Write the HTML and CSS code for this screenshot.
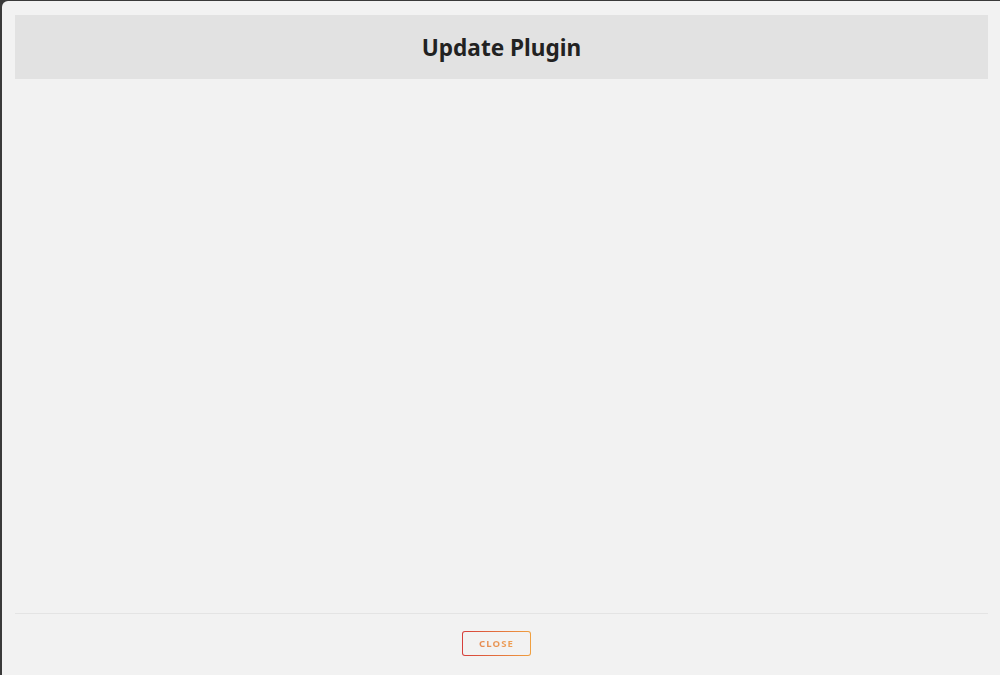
FILE: index.html
```html
<!DOCTYPE html>
<html lang="en">
<head>
    <meta charset="UTF-8">
    <meta name="viewport" content="width=device-width, initial-scale=1.0">
    <title>Update Plugin</title>
    <link rel="stylesheet" href="styles.css">
</head>
<body>
    <!-- Plugin update dialog -->
    <div class="modal">
        <div class="modal-header">
            <h1 class="modal-title">Update Plugin</h1>
        </div>

        <div class="modal-body"></div>

        <div class="modal-footer">
            <button class="btn-outline" type="button"><span>Close</span></button>
        </div>
    </div>
</body>
</html>
```

FILE: styles.css
```css
/* Dark backdrop behind the dialog */
html, body {
    margin: 0;
    padding: 0;
    height: 100%;
    overflow: hidden;
    background: #3a3a3a;
    font-family: "Noto Sans", sans-serif;
}

/* Dialog box */
.modal {
    margin: 1px 0 0 2px;
    height: 690px;
    background: #f2f2f2;
    border-radius: 6px 0 0 0;
    padding: 14px 12px 0 13px;
    display: flex;
    flex-direction: column;
}

/* Grey title strip */
.modal-header {
    height: 64px;
    background: #e2e2e2;
    display: flex;
    justify-content: center;
    align-items: center;
}

.modal-title {
    margin: 0;
    font-size: 22.6px;
    font-weight: 700;
    color: #222;
}

.modal-body {
    height: 534px;
}

/* Footer with a thin rule above it */
.modal-footer {
    border-top: 1px solid #e4e4e4;
    display: flex;
    justify-content: center;
    padding: 17px 10px 0 0;
}

/* Outline button with a red-to-orange gradient border */
.btn-outline {
    width: 69px;
    height: 25px;
    border: 1.5px solid transparent;
    border-radius: 3px;
    background:
        linear-gradient(#f2f2f2, #f2f2f2) padding-box,
        linear-gradient(90deg, #d63f3c, #f0a040) border-box;
    font-family: "Noto Sans", sans-serif;
    font-size: 9.6px;
    font-weight: 700;
    letter-spacing: 1.1px;
    text-transform: uppercase;
    padding: 0;
    cursor: pointer;
}

.btn-outline span {
    background: linear-gradient(90deg, #e58a52, #eea055);
    -webkit-background-clip: text;
    background-clip: text;
    color: transparent;
}
```
